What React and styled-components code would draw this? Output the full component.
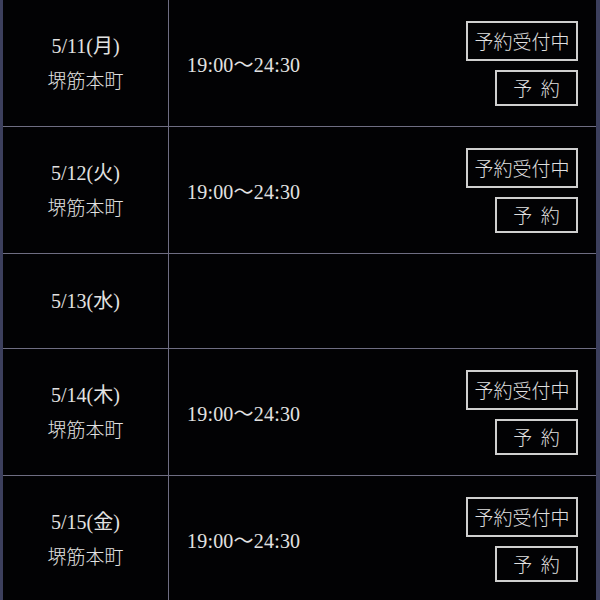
import React from 'react'
import styled, {createGlobalStyle} from 'styled-components'

const GlobalStyle = createGlobalStyle`
  html, body {
    margin: 0;
    padding: 0;
    background: #000;
  }
  body {
    font-family: "Liberation Serif", "Noto Sans CJK JP", serif;
    color: #e2e2e2;
  }
`

const Schedule = styled.div`
  width: 600px;
  height: 600px;
  overflow: hidden;
  box-sizing: border-box;
  border-left: 3px solid #3c3f5d;
  border-right: 4px solid #3c3f5d;
  background: #020204;
`

const Row = styled.div`
  display: grid;
  grid-template-columns: 166px 1fr auto;
  height: ${props => props.$empty ? '94px' : '126px'};
  border-bottom: 1px solid #6e6d82;
`

const DateCell = styled.div`
  display: flex;
  flex-direction: column;
  align-items: center;
  justify-content: center;
  gap: 6px;
  border-right: 1px solid #6e6d82;
  font-size: 20px;
  line-height: 27px;
`

const Place = styled.span`
  font-family: "Noto Sans CJK JP", sans-serif;
  font-size: 19px;
  font-weight: 300;
`

const TimeCell = styled.div`
  display: flex;
  align-items: center;
  padding-left: 18px;
  font-size: 20px;
  letter-spacing: 0.2px;
`

const ActionCell = styled.div`
  display: flex;
  flex-direction: column;
  align-items: flex-end;
  justify-content: center;
  gap: 9px;
  padding-right: 18px;
`

const Box = styled.div`
  display: flex;
  align-items: center;
  justify-content: center;
  box-sizing: border-box;
  border: 2px solid #cfcfcf;
  font-family: "Noto Sans CJK JP", sans-serif;
  font-weight: 300;
  font-size: 19px;
  color: #e0e0e0;
  width: ${props => props.$w}px;
  height: ${props => props.$h}px;
  letter-spacing: ${props => props.$spread ? '0.45em' : '0'};
  padding-left: ${props => props.$spread ? '0.45em' : '0'};
`

const days = [
  {date: '5/11(月)', place: '堺筋本町', time: '19:00〜24:30'},
  {date: '5/12(火)', place: '堺筋本町', time: '19:00〜24:30'},
  {date: '5/13(水)'},
  {date: '5/14(木)', place: '堺筋本町', time: '19:00〜24:30'},
  {date: '5/15(金)', place: '堺筋本町', time: '19:00〜24:30'}
]

export default function App () {
  return (
    <>
      <GlobalStyle />
      <Schedule>
        {days.map(day => (
          <Row key={day.date} $empty={!day.place}>
            <DateCell>
              <span>{day.date}</span>
              {day.place && <Place>{day.place}</Place>}
            </DateCell>
            <TimeCell>{day.time}</TimeCell>
            <ActionCell>
              {day.place && (
                <>
                  <Box $w={112} $h={40}>予約受付中</Box>
                  <Box $w={83} $h={36} $spread>予約</Box>
                </>
              )}
            </ActionCell>
          </Row>
        ))}
      </Schedule>
    </>
  )
}
